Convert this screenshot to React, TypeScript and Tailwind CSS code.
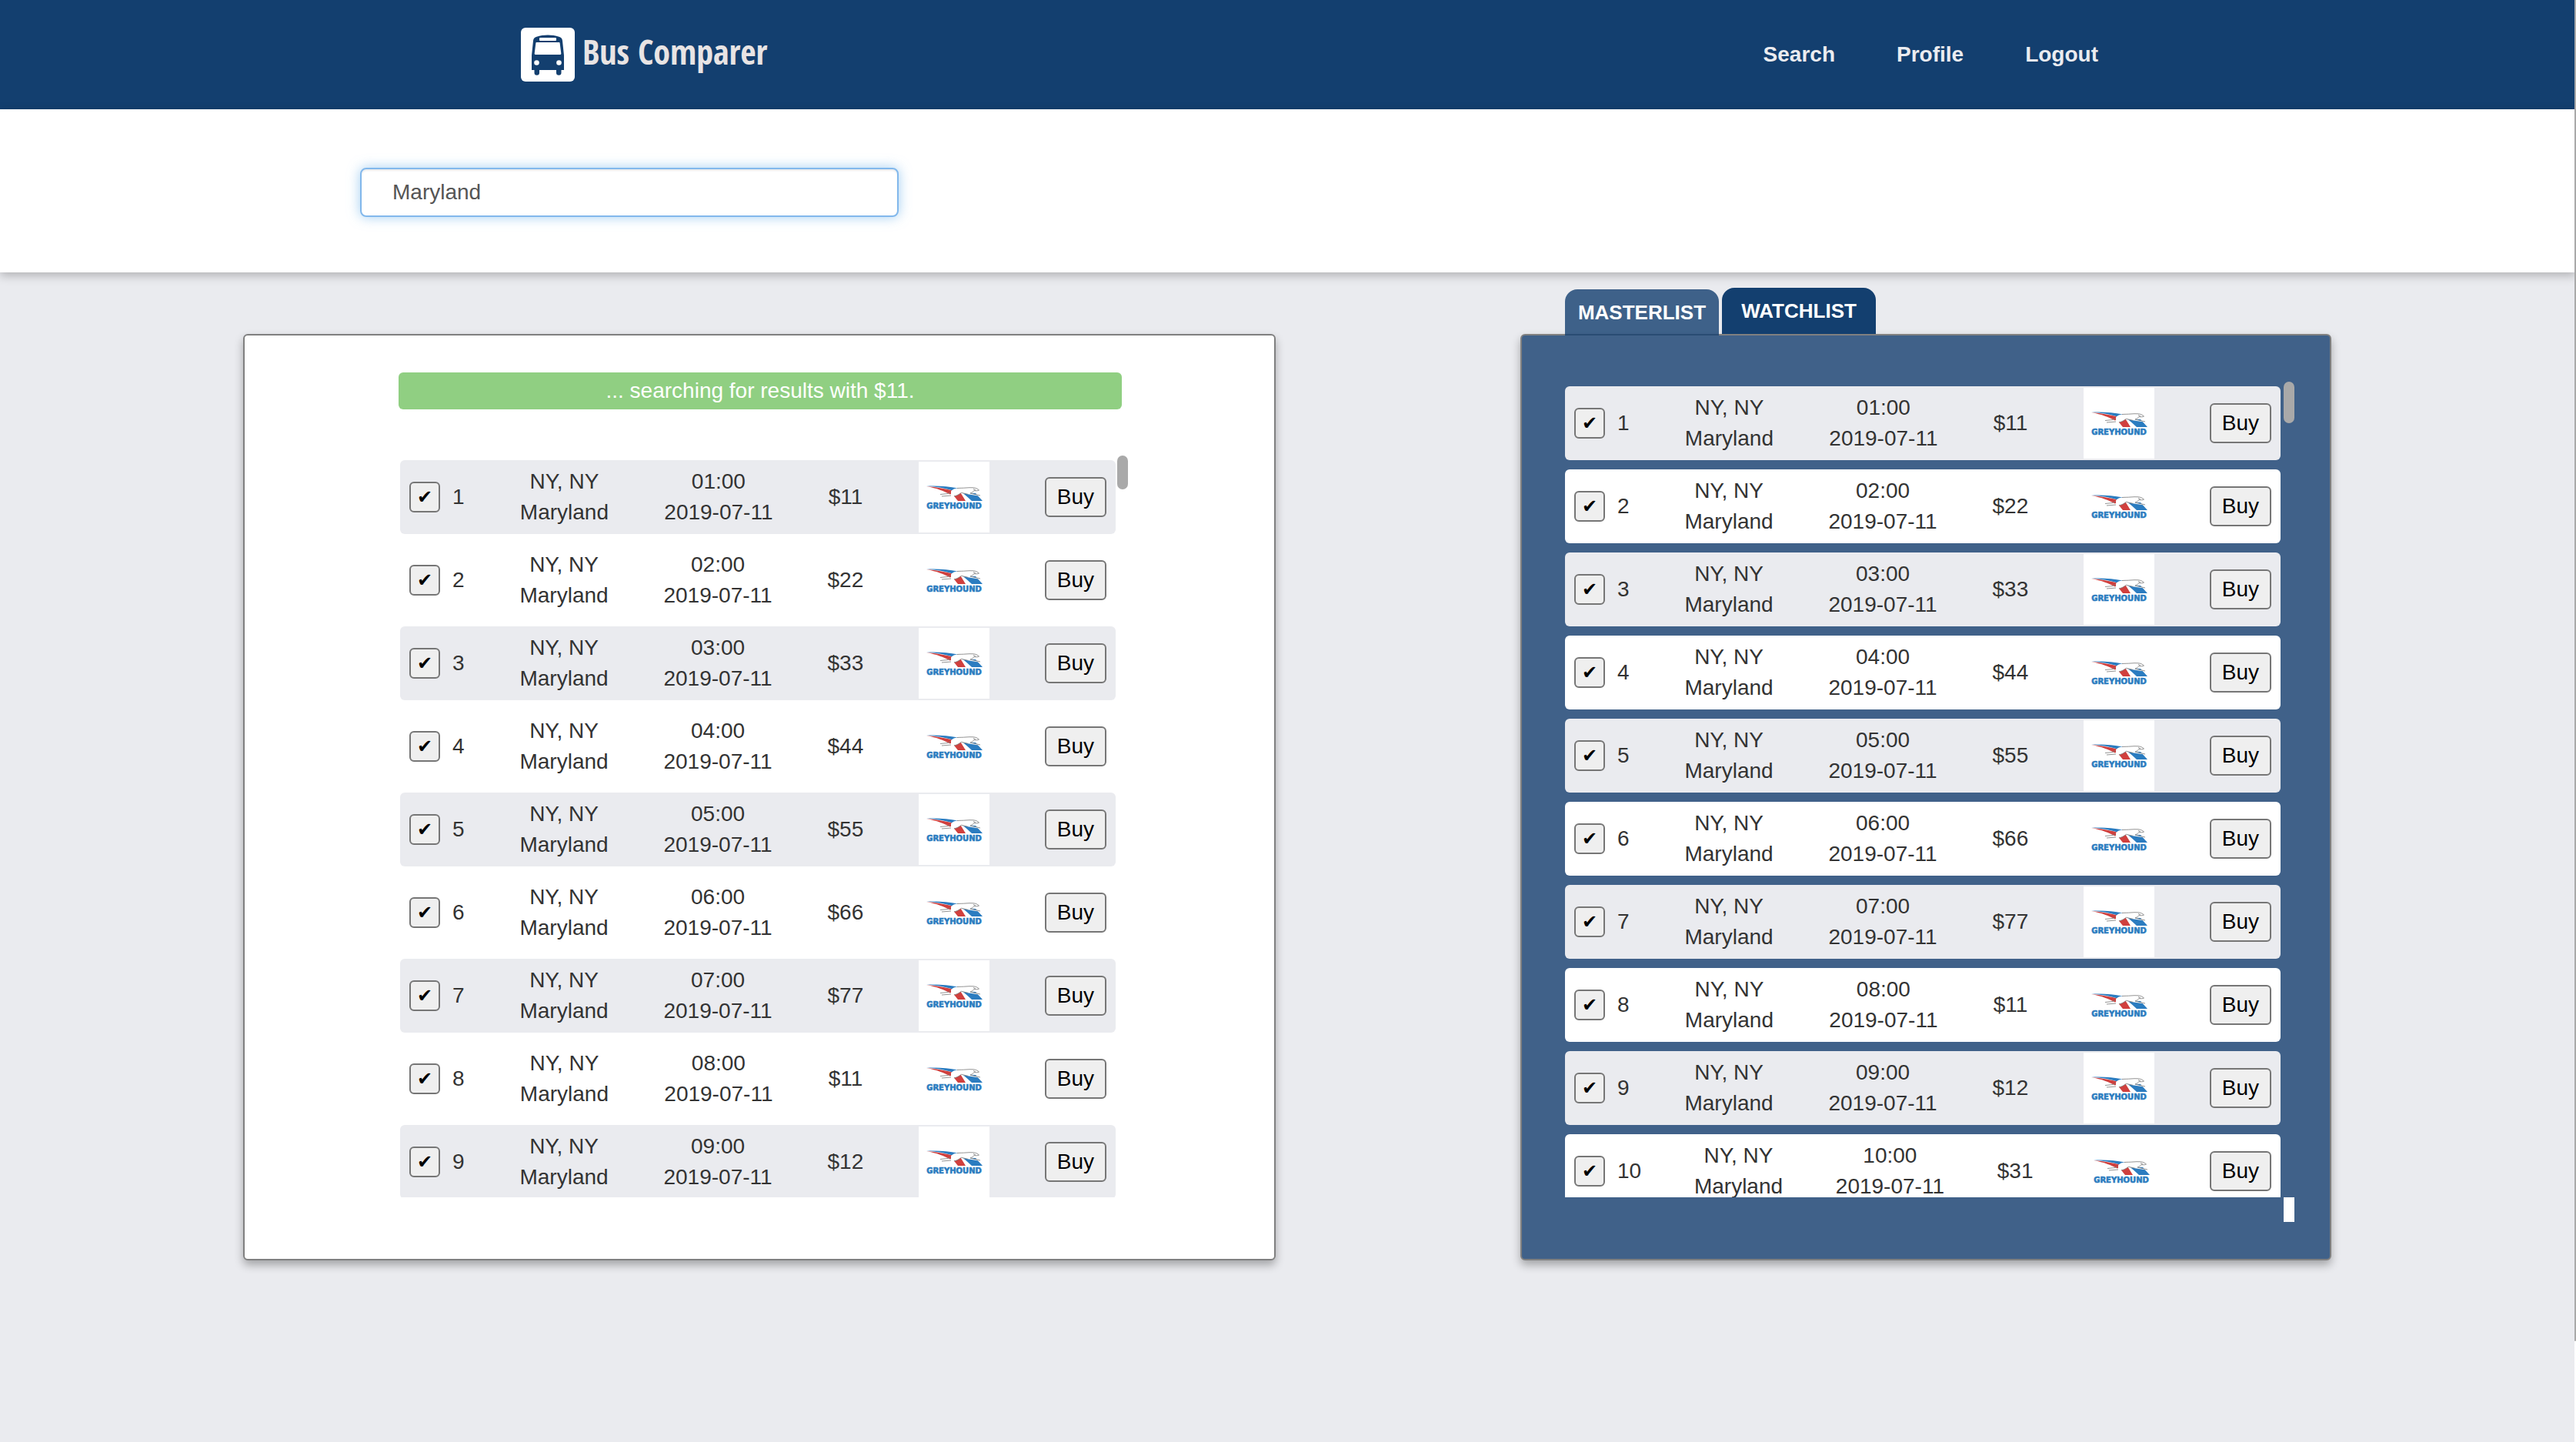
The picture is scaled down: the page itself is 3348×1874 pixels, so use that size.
import React from "react";

type Trip = { id: number; time: string; price: number };

const trips: Trip[] = [
  { id: 1, time: "01:00", price: 11 },
  { id: 2, time: "02:00", price: 22 },
  { id: 3, time: "03:00", price: 33 },
  { id: 4, time: "04:00", price: 44 },
  { id: 5, time: "05:00", price: 55 },
  { id: 6, time: "06:00", price: 66 },
  { id: 7, time: "07:00", price: 77 },
  { id: 8, time: "08:00", price: 11 },
  { id: 9, time: "09:00", price: 12 },
  { id: 10, time: "10:00", price: 31 },
];

function BusIcon() {
  return (
    <svg viewBox="0 0 70 70" className="size-[70px]" aria-hidden="true">
      <rect width="70" height="70" rx="6" fill="#fff" />
      <path
        d="M14 55V36l2-19c.3-3 1.800-4.500 4.500-5.300C25 10.300 30 9.500 35 9.500s10 .8 14.500 2.200c2.700.8 4.200 2.300 4.500 5.300l2 19v19h-3.500v3.500a3.200 3.200 0 0 1-6.500 0V55H24v3.500a3.200 3.200 0 0 1-6.500 0V55z"
        fill="#133f6f"
      />
      <rect x="24" y="13" width="22" height="4" rx="1" fill="#fff" />
      <path d="M20.500 19h29c.7 0 1 .3 1.100 1l1.700 13.600c.1.900-.3 1.400-1.200 1.400H18.900c-.9 0-1.300-.5-1.200-1.400L19.400 20c.1-.7.400-1 1.100-1z" fill="#fff" />
      <circle cx="20.500" cy="45.500" r="3.300" fill="#fff" />
      <circle cx="49.500" cy="45.500" r="3.300" fill="#fff" />
    </svg>
  );
}

function GreyhoundLogo() {
  return (
    <svg viewBox="0 0 92 92" className="h-[92px] w-[92px] shrink-0 bg-white" role="img" aria-label="Greyhound">
      <path d="M10 31.800C24 31 38 32 51 34.500L47 38.500C34 34.500 24 32.500 10 31.800z" fill="#2b7cc0" />
      <path d="M10 32C24 33 36 35.500 47 38.500L41 42.500C33 38.500 24 34.500 10 32z" fill="#d0403e" />
      <path d="M45 43.500L53 38 61 51H51z" fill="#d0403e" />
      <path d="M57 40.500L74 41 83 51H69C65 47 61 43.500 57 40.500z" fill="#2b7cc0" />
      <path
        d="M42 38.500c2-2.500 5-4 9-4 4-.3 7-.2 10-.5 3-.2 7-.5 10-.2 3.500.3 5.500 1.500 7.500 3.200-1.500 1-4 .8-6.500.6-1.500 1.700-3 2.500-5 3.400l13 3-1 .6-15-2.300c-4-.5-5.500-1-8.500-2-3 2-6 4.200-9.500 4.400l-8 .2 4-2.300z"
        fill="#fff"
      />
      <path
        d="M50 34.500c4-.3 8-.2 11-.5 3-.2 7-.5 10-.2 3.500.3 5.500 1.500 7.500 3.200-1.500 1-4 .8-6.500.6-1.500 1.700-3 2.500-5 3.400l13 3M64 42.300l-8.500-2c-3 2-6 4.200-9.500 4.400M28 42.500l10-1 3-2M30 45l12-1M71 35.500l3 1.500"
        fill="none"
        stroke="#777"
        strokeWidth=".8"
      />
      <text
        x="46"
        y="61"
        textAnchor="middle"
        fontFamily="'DejaVu Sans', sans-serif"
        fontWeight="700"
        fontSize="10"
        fill="#2b7cc0"
        stroke="#2b7cc0"
        strokeWidth=".6"
      >
        GREYHOUND
      </text>
    </svg>
  );
}

function TripRow({ trip }: { trip: Trip }) {
  return (
    <tr className="flex h-24 shrink-0 items-center justify-between rounded-md bg-white px-3 odd:bg-[#eaebef]">
      <td className="flex items-center gap-4">
        <button
          type="button"
          aria-label={`Watch trip ${trip.id}`}
          className="flex size-10 items-center justify-center rounded-md border-2 border-[#767676] bg-[#efefef] font-['DejaVu_Sans'] text-2xl text-black"
        >
          ✔
        </button>
        <span>{trip.id}</span>
      </td>
      <td className="text-center">
        NY, NY
        <br />
        Maryland
      </td>
      <td className="text-center">
        {trip.time}
        <br />
        2019-07-11
      </td>
      <td>${trip.price}</td>
      <td>
        <GreyhoundLogo />
      </td>
      <td>
        <button type="button" className="h-[52px] w-20 rounded-md border-2 border-[#767676] bg-[#efefef] text-black">
          Buy
        </button>
      </td>
    </tr>
  );
}

function TripTable({ label, items }: { label: string; items: Trip[] }) {
  return (
    <table aria-label={label} className="block min-w-0 flex-1 overflow-hidden pt-1.5">
      <tbody className="flex flex-col gap-3">
        {items.map((t) => (
          <TripRow key={t.id} trip={t} />
        ))}
      </tbody>
    </table>
  );
}

export default function App() {
  return (
    <div className="relative flex min-h-screen flex-col bg-[#eaebef] font-['Liberation_Sans',Arial,sans-serif] text-[28px] leading-10 text-[#333]">
      <header className="flex h-[142px] items-center justify-between bg-[#133f6f] pr-[621px] pl-[677px]">
        <a href="#" className="flex items-center gap-2.5">
          <BusIcon />
          <span className="pb-2 font-['Open_Sans_Condensed','Noto_Sans_Condensed','Roboto_Condensed','Liberation_Sans_Narrow','Open_Sans',sans-serif] text-[44px] font-bold text-[#e8e4e4]">
            Bus Comparer
          </span>
        </a>
        <nav className="flex gap-20 font-bold text-[#ebecf0]">
          <a href="#search">Search</a>
          <a href="#profile">Profile</a>
          <a href="#logout">Logout</a>
        </nav>
      </header>

      <section className="z-10 flex h-[212px] items-start bg-white pt-[76px] pl-[468px] shadow-[0_4px_12px_rgba(0,0,0,0.25)]">
        <input
          type="text"
          aria-label="Destination"
          defaultValue="Maryland"
          className="h-16 w-[700px] rounded-lg border-2 border-[#82b8ec] bg-white px-10 text-[#555] shadow-[inset_0_2px_2px_rgba(0,0,0,0.075),0_0_16px_rgba(102,175,233,0.6)] outline-none"
        />
      </section>

      <main className="flex items-end justify-between pt-5 pr-[318px] pl-[316px]">
        <section className="h-[1204px] w-[1342px] rounded-md border-2 border-[#808080] bg-white pt-12 pr-[198px] pl-[200px] shadow-[0_6px_12px_rgba(0,0,0,0.3)]">
          <p className="h-12 rounded-md bg-[#90cf82] text-center leading-12 text-white">... searching for results with $11.</p>
          <div className="mt-[60px] -mr-2 ml-0.5 flex h-[964px] gap-0.5">
            <TripTable label="Search results" items={trips.slice(0, 9)} />
            <div className="h-11 w-3.5 rounded-full bg-[#a9a9a9]" />
          </div>
        </section>

        <div className="w-[1054px]">
          <div role="tablist" className="flex items-end gap-1 pl-[58px] text-[26px] font-bold text-white">
            <button role="tab" aria-selected="true" type="button" className="relative -mb-0.5 h-[60px] w-[200px] rounded-t-2xl bg-[#133f6f]/80">
              MASTERLIST
            </button>
            <button role="tab" aria-selected="false" type="button" className="h-[60px] w-[200px] rounded-t-2xl bg-[#133f6f]">
              WATCHLIST
            </button>
          </div>
          <section className="h-[1204px] rounded-md border-2 border-[#808080] bg-[#406189] pt-[60px] pr-[46px] pl-14 shadow-[0_6px_12px_rgba(0,0,0,0.3)]">
            <div className="flex h-[1092px] gap-1">
              <div className="flex h-[1060px] min-w-0 flex-1">
                <TripTable label="Master list" items={trips} />
              </div>
              <div className="flex w-3.5 flex-col justify-between">
                <div className="h-[54px] rounded-full bg-[#a9a9a9]" />
                <div className="h-8 bg-white" />
              </div>
            </div>
          </section>
        </div>
      </main>

      {/* Page scroll track along the right edge */}
      <div className="absolute inset-y-0 right-0 z-20 w-0.5 bg-white">
        <div className="h-[93%] rounded-b-full bg-[#a9a9a9]" />
      </div>
    </div>
  );
}
